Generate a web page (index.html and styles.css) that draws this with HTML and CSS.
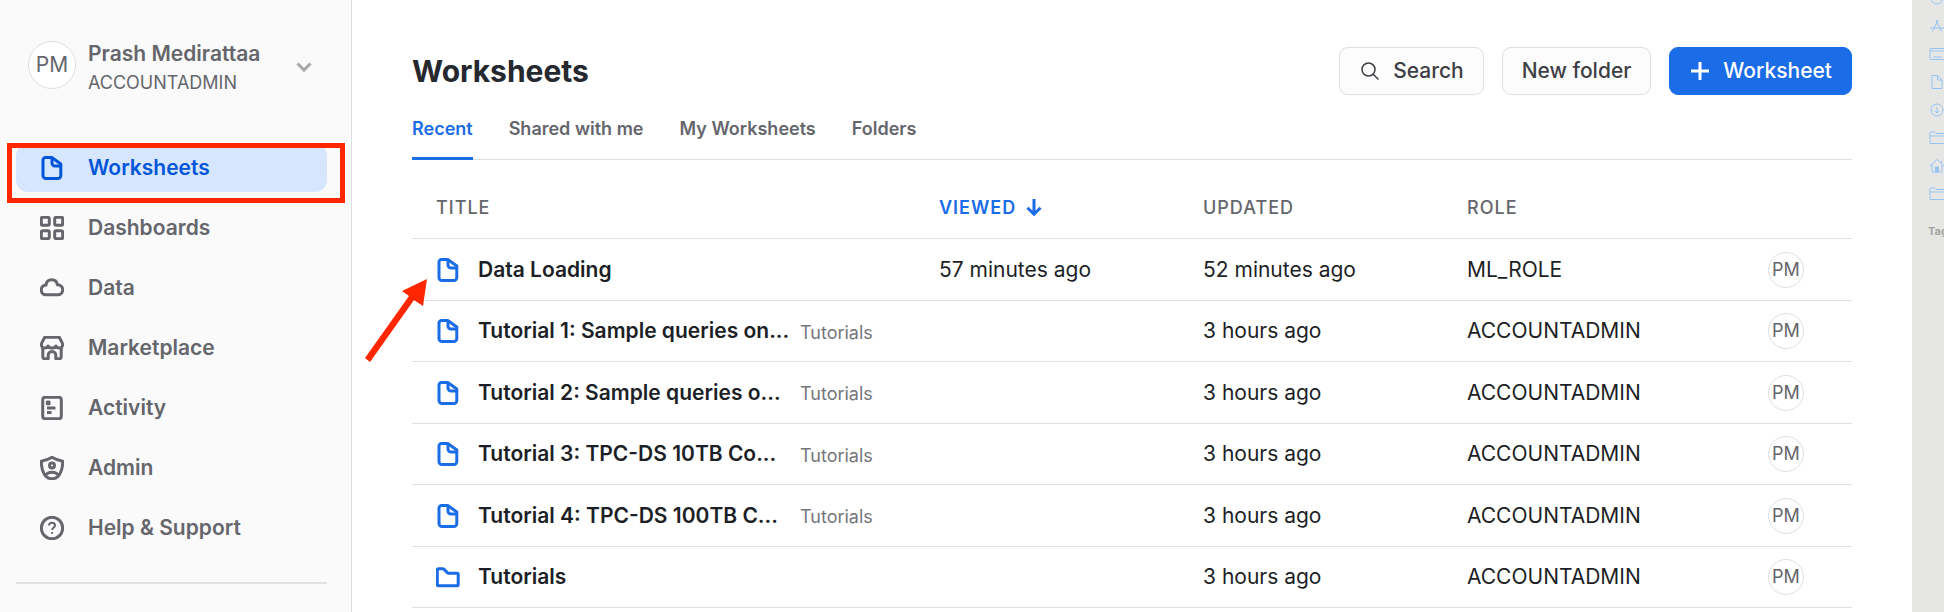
FILE: index.html
```html
<!DOCTYPE html>
<html lang="en">
<head>
<meta charset="utf-8">
<title>Worksheets</title>
<link rel="stylesheet" href="styles.css">
</head>
<body>
<svg class="sprite" aria-hidden="true">
  <symbol id="i-file" viewBox="0 0 24 24"><path d="M5.500 1.500h6.300L20.800 8v11.500a3 3 0 0 1-3 3H6a3 3 0 0 1-3-3V4a2.500 2.500 0 0 1 2.500-2.500z"/><path d="M12 2v5a3 3 0 0 0 3 3h6"/></symbol>
  <symbol id="i-folder" viewBox="0 0 24 24"><path d="M1.300 4.800a1 1 0 0 1 1-1h4.400a2 2 0 0 1 1.400.6l3.200 3.200a2 2 0 0 0 1.400.6h8.500a1 1 0 0 1 1 1v10.500a1 1 0 0 1-1 1H2.300a1 1 0 0 1-1-1z"/></symbol>
  <symbol id="i-grid" viewBox="0 0 24 24"><rect x="1.300" y="1.300" width="8" height="8" rx="1.500"/><rect x="14.700" y="1.300" width="8" height="8" rx="1.500"/><rect x="1.300" y="14.700" width="8" height="8" rx="1.500"/><rect x="14.700" y="14.700" width="8" height="8" rx="1.500"/></symbol>
  <symbol id="i-cloud" viewBox="0 0 24 24"><path d="M5.800 18.800h11.700c3 0 5.200-2.200 5.200-5 0-2.900-2.300-5.100-5.300-5.100-.5-3-2.900-5-5.700-5-3.200 0-5.500 2.200-5.700 5.400-2.700.3-4.700 2.200-4.700 4.900 0 2.700 2 4.800 4.500 4.800z"/></symbol>
  <symbol id="i-store" viewBox="0 0 24 24"><path d="M2.800 11v9.700a2 2 0 0 0 2 2h3.400v-3.500a3.800 3.800 0 0 1 7.600 0v3.500h3.400a2 2 0 0 0 2-2V11"/><path d="M4.700 1.300h14.600l3 5.800c1 3.200-1 5-3 5-1.500 0-2.700-.8-3.400-2.100-.7 1.300-2.200 2.100-3.900 2.100S8.800 11.300 8.100 10c-.7 1.300-1.900 2.100-3.400 2.100-2 0-4-1.800-3-5z"/></symbol>
  <symbol id="i-activity" viewBox="0 0 24 24"><rect x="2.700" y="1.300" width="18.600" height="21.400" rx="2.500"/><path d="M7 12h8.500M7 16.600h4.500"/><rect x="7.300" y="6" width="1.800" height="1.800"/></symbol>
  <symbol id="i-shield" viewBox="0 0 24 24"><path d="M12 1.300c3 1.900 6.500 3.200 10.700 4C22.700 15 19 22.700 12 22.700S1.300 15 1.300 5.300C5.500 4.500 9 3.200 12 1.300z"/><circle cx="12" cy="9.500" r="2.500"/><path d="M5.800 18.800c1.700-1.800 3.700-2.500 6.200-2.500s4.500.7 6.200 2.500"/></symbol>
  <symbol id="i-help" viewBox="0 0 24 24"><circle cx="12" cy="12" r="10.700"/><path stroke-width="2" d="M9 9.600c0-1.800 1.300-2.900 3-2.900s3 1 3 2.700c0 2-2.900 2.200-2.900 4.700M12.100 16v1.800"/></symbol>
  <symbol id="i-home" viewBox="0 0 16 16"><path d="M1 8l7-6.500L15 8M3 7v7h10V7M12.500 5V2.500"/><path fill="currentColor" d="M6.500 9h3v5h-3z"/></symbol>
  <symbol id="i-dir" viewBox="0 0 16 16"><path d="M16 3.500H7L5.500 2H2a1 1 0 0 0-1 1v10.500h15M1 6h15"/></symbol>
</svg>

<div class="app">
  <aside class="sidebar">
    <button class="account" type="button">
      <span class="avatar avatar-lg">PM</span>
      <span class="account-text"><span class="account-name">Prash Medirattaa</span><span class="account-role">ACCOUNTADMIN</span></span>
      <svg class="chevron" viewBox="0 0 16 10"><path d="M1.500 1.500L8 8l6.500-6.500"/></svg>
    </button>
    <nav class="nav">
      <a class="nav-item active" href="#"><svg class="icon"><use href="#i-file"/></svg>Worksheets<span class="highlight"></span></a>
      <a class="nav-item" href="#"><svg class="icon"><use href="#i-grid"/></svg>Dashboards</a>
      <a class="nav-item" href="#"><svg class="icon"><use href="#i-cloud"/></svg>Data</a>
      <a class="nav-item" href="#"><svg class="icon"><use href="#i-store"/></svg>Marketplace</a>
      <a class="nav-item" href="#"><svg class="icon"><use href="#i-activity"/></svg>Activity</a>
      <a class="nav-item" href="#"><svg class="icon"><use href="#i-shield"/></svg>Admin</a>
      <a class="nav-item" href="#"><svg class="icon"><use href="#i-help"/></svg>Help &amp; Support</a>
    </nav>
    <hr class="divider">
  </aside>

  <main class="main">
    <header class="topbar">
      <h1>Worksheets</h1>
      <div class="actions">
        <button class="btn" type="button"><svg class="btn-icon search" viewBox="0 0 18 18"><circle cx="7.500" cy="7.500" r="6.500"/><path d="M12 12l5.500 5.500"/></svg>Search</button>
        <button class="btn" type="button">New folder</button>
        <button class="btn primary" type="button"><svg class="btn-icon" viewBox="0 0 18 18"><path d="M9 0v18M0 9h18"/></svg>Worksheet</button>
      </div>
    </header>
    <nav class="tabs">
      <a class="tab current" href="#">Recent</a>
      <a class="tab" href="#">Shared with me</a>
      <a class="tab" href="#">My Worksheets</a>
      <a class="tab" href="#">Folders</a>
    </nav>
    <table class="sheets">
      <colgroup><col class="c-title"><col class="c-time"><col class="c-time"><col class="c-role"><col></colgroup>
      <thead>
        <tr><th>TITLE</th><th class="sorted">VIEWED<svg class="sort" viewBox="0 0 16 18"><path d="M8 1v15M1.500 9.700L8 16.200l6.500-6.500"/></svg></th><th>UPDATED</th><th>ROLE</th><th></th></tr>
      </thead>
      <tbody>
        <tr><td><div class="cell"><svg class="icon"><use href="#i-file"/></svg><a class="name" href="#">Data Loading</a></div>
          <svg class="arrow" viewBox="0 0 64 84"><path d="M63 1L59 28 50 22 6 84 1 80 45 18 38 13z"/></svg></td><td>57 minutes ago</td><td>52 minutes ago</td><td>ML_ROLE</td><td><span class="avatar">PM</span></td></tr>
        <tr><td><div class="cell"><svg class="icon"><use href="#i-file"/></svg><a class="name" href="#">Tutorial 1: Sample queries on...</a><span class="folder">Tutorials</span></div></td><td></td><td>3 hours ago</td><td>ACCOUNTADMIN</td><td><span class="avatar">PM</span></td></tr>
        <tr><td><div class="cell"><svg class="icon"><use href="#i-file"/></svg><a class="name" href="#">Tutorial 2: Sample queries o...</a><span class="folder">Tutorials</span></div></td><td></td><td>3 hours ago</td><td>ACCOUNTADMIN</td><td><span class="avatar">PM</span></td></tr>
        <tr><td><div class="cell"><svg class="icon"><use href="#i-file"/></svg><a class="name" href="#">Tutorial 3: TPC-DS 10TB Co...</a><span class="folder">Tutorials</span></div></td><td></td><td>3 hours ago</td><td>ACCOUNTADMIN</td><td><span class="avatar">PM</span></td></tr>
        <tr><td><div class="cell"><svg class="icon"><use href="#i-file"/></svg><a class="name" href="#">Tutorial 4: TPC-DS 100TB C...</a><span class="folder">Tutorials</span></div></td><td></td><td>3 hours ago</td><td>ACCOUNTADMIN</td><td><span class="avatar">PM</span></td></tr>
        <tr><td><div class="cell"><svg class="icon"><use href="#i-folder"/></svg><a class="name" href="#">Tutorials</a></div></td><td></td><td>3 hours ago</td><td>ACCOUNTADMIN</td><td><span class="avatar">PM</span></td></tr>
      </tbody>
    </table>
  </main>

  <aside class="finder">
    <svg viewBox="0 0 16 16"><circle cx="8" cy="8" r="6"/></svg>
    <svg viewBox="0 0 16 16"><path d="M9 2L3.500 13.500M7 2l5.500 11.500M1 10h14"/></svg>
    <svg viewBox="0 0 16 16"><rect x="1" y="2.500" width="18" height="11" rx="1"/><path d="M1 5h15M4 11h9"/></svg>
    <svg viewBox="0 0 16 16"><path d="M3 1.500h5.500L13 6v8.500H3zM8.500 1.500V6H13"/></svg>
    <svg viewBox="0 0 16 16"><circle cx="8" cy="8" r="6"/><path d="M8 5v6M5.500 8.500L8 11l2.500-2.500"/></svg>
    <svg><use href="#i-dir"/></svg>
    <svg><use href="#i-home"/></svg>
    <svg><use href="#i-dir"/></svg>
    <span class="tags">Tag</span>
  </aside>
</div>
</body>
</html>
```
FILE: styles.css
```css
* { box-sizing: border-box; }

body {
  margin: 0;
  font-family: Inter, "Liberation Sans", sans-serif;
  font-size: 21px;
  line-height: 24px;
  color: #1d1f26;
  background: #fff;
}

a { color: inherit; text-decoration: none; }
button { font: inherit; cursor: pointer; }

svg {
  fill: none;
  stroke: currentColor;
  stroke-width: 2;
  flex: none;
}

.sprite { position: absolute; width: 0; height: 0; }

.app {
  display: grid;
  grid-template-columns: 352px minmax(0, 1fr) 32px;
  min-height: 100vh;
}

.icon { width: 24px; height: 24px; stroke-width: 3; stroke-linejoin: round; }

/* Sidebar */
.sidebar {
  padding: 35px 24px 0 16px;
  background: #fafafa;
  border-right: 1px solid #dedfe1;
  color: #65666c;
}

.account {
  display: flex;
  align-items: center;
  gap: 12px;
  width: 100%;
  padding: 0 15px 0 12px;
  border: 0;
  background: none;
  color: inherit;
  text-align: left;
}

.account-text { display: flex; flex: 1; flex-direction: column; gap: 5px; padding-top: 7px; }
.account-name { font-weight: 600; }
.account-role { font-size: 18px; }
.chevron { width: 16px; height: 10px; margin-top: 4px; color: #a6a7ab; stroke-width: 3; }

.avatar {
  display: inline-flex;
  align-items: center;
  justify-content: center;
  width: 36px;
  height: 36px;
  border: 1px solid #dedfe1;
  border-radius: 50%;
  background: #fff;
  color: #65666c;
  font-size: 18px;
}

.avatar-lg { width: 48px; height: 48px; font-size: 21px; }

.nav { display: flex; flex-direction: column; gap: 12px; margin-top: 49px; }

.nav-item {
  position: relative;
  display: flex;
  align-items: center;
  gap: 24px;
  height: 48px;
  padding: 0 24px;
  border-radius: 12px;
  font-weight: 600;
}

.nav-item.active { background: #d6e6ff; color: #0055d8; }

.highlight {
  position: absolute;
  inset: -1px -18px -11px -9px;
  border: 5px solid #ff2600;
}

.divider { height: 2px; margin: 30px 0 0; border: 0; background: #e2e2e2; }

/* Main */
.main { padding: 47px 60px 0; }

.topbar { display: flex; align-items: center; justify-content: space-between; }
h1 { margin: 0; font-size: 30px; line-height: 36px; font-weight: 700; color: #26282f; }
.actions { display: flex; gap: 18px; }

.btn {
  display: flex;
  align-items: center;
  gap: 14px;
  height: 48px;
  padding: 0 19px;
  border: 1px solid #dedfe1;
  border-radius: 9px;
  background: #fcfcfc;
  color: #3d3f45;
  font-weight: 500;
}

.btn.primary { border-color: #1a6ce7; background: #1a6ce7; color: #fff; }
.btn-icon { width: 18px; height: 18px; margin-left: 2px; stroke-width: 3; }
.btn-icon.search { stroke-width: 1; stroke-width: 1.500; }

.tabs {
  display: flex;
  gap: 36px;
  height: 65px;
  border-bottom: 1px solid #dedfe1;
  color: #65666c;
  font-size: 18px;
  font-weight: 600;
}

.tab { height: 65px; padding-top: 22px; }
.tab.current { border-bottom: 3px solid #1a6ce7; color: #1a6ce7; }

.sheets { width: 100%; border-collapse: separate; border-spacing: 0; table-layout: fixed; }
.c-title { width: 527px; }
.c-time { width: 264px; }
.c-role { width: 301px; }

th, td { padding: 0; border-bottom: 1px solid #dedfe1; text-align: left; }
th { height: 79px; padding-top: 18px; color: #65666c; font-size: 18px; font-weight: 500; letter-spacing: 1px; }
td { height: 61px; }
tr:nth-child(odd) td { height: 62px; }
th:first-child, td:first-child { position: relative; padding-left: 24px; }

.sorted { color: #1a6ce7; font-weight: 600; }
.sort { width: 16px; height: 18px; margin-left: 10px; vertical-align: -2px; stroke-width: 3; }

.cell { display: flex; align-items: center; gap: 18px; }
.cell .icon { color: #1a6ce7; }
.name { font-weight: 600; }
.cell .name:not(:last-child) { width: 304px; white-space: nowrap; }
.folder { padding-top: 3px; color: #75767b; font-size: 18px; }
td .avatar { vertical-align: middle; }

.arrow {
  position: absolute;
  left: -48px;
  top: 39px;
  width: 64px;
  height: 84px;
  fill: #ff2600;
  stroke: none;
}

/* Window edge */
.finder {
  display: flex;
  flex-direction: column;
  gap: 12px;
  padding-left: 17px;
  overflow: hidden;
  background: #e6e7e5;
  color: #96c3f2;
}

.finder svg { width: 16px; height: 16px; stroke-width: 1; }
.finder svg:first-child { margin-top: -10px; }
.tags { margin-top: 5px; margin-left: -1px; color: #a2a3a1; font-size: 11px; font-weight: 700; }
```
